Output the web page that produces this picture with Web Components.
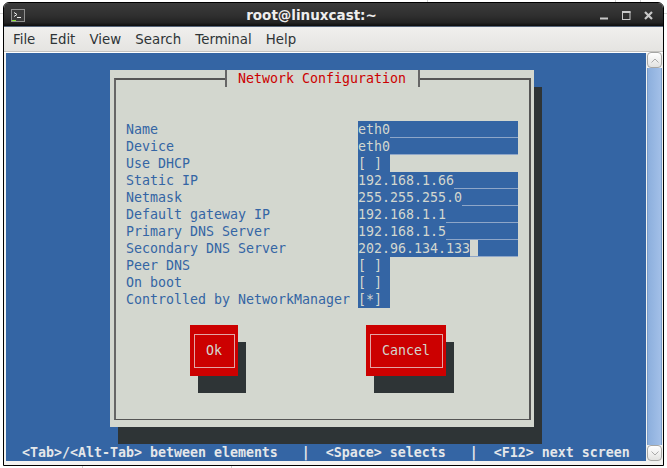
<!DOCTYPE html>
<html>
<head>
<meta charset="utf-8">
<style>
  html, body { margin: 0; height: 100%; overflow: hidden; }
  html { background-color: #fff;
    background-image: linear-gradient(#d8d8d8, #d8d8d8), linear-gradient(#d8d8d8, #d8d8d8),
      linear-gradient(#d0d0d0, #d0d0d0), linear-gradient(#d0d0d0, #d0d0d0), linear-gradient(#d0d0d0, #d0d0d0),
      linear-gradient(#d0d0d0, #d0d0d0), linear-gradient(#d0d0d0, #d0d0d0);
    background-repeat: no-repeat;
    background-size: 3px 1px, 3px 1px, 1px 2px, 1px 2px, 1px 2px, 1px 2px, 1px 2px;
    background-position: 0 13px, 664px 13px, 427px 0, 615px 0, 640px 0, 82px 466px, 231px 466px; }
  body { background: transparent; }
</style>
</head>
<body>
<term-window title="root@linuxcast:~">
  <menu-bar items="File,Edit,View,Search,Terminal,Help"></menu-bar>
  <term-dialog heading="Network Configuration">
    <config-row label="Name" value="eth0"></config-row>
    <config-row label="Device" value="eth0"></config-row>
    <config-row label="Use DHCP" check=" "></config-row>
    <config-row label="Static IP" value="192.168.1.66"></config-row>
    <config-row label="Netmask" value="255.255.255.0"></config-row>
    <config-row label="Default gateway IP" value="192.168.1.1"></config-row>
    <config-row label="Primary DNS Server" value="192.168.1.5"></config-row>
    <config-row label="Secondary DNS Server" value="202.96.134.133" focused></config-row>
    <config-row label="Peer DNS" check=" "></config-row>
    <config-row label="On boot" check=" "></config-row>
    <config-row label="Controlled by NetworkManager" check="*"></config-row>
    <div slot="buttons" style="display:contents">
      <term-button label="Ok"></term-button>
      <term-button label="Cancel"></term-button>
    </div>
  </term-dialog>
  <span slot="status">  &lt;Tab&gt;/&lt;Alt-Tab&gt; between elements   |  &lt;Space&gt; selects   |  &lt;F12&gt; next screen</span>
</term-window>

<script>
const MONO = `13.29px/17px "DejaVu Sans Mono", monospace`;

class TermWindow extends HTMLElement {
  constructor() {
    super();
    this.shadow = this.attachShadow({ mode: "open" });
    this.shadow.innerHTML = `
      <style>
        :host { box-sizing: border-box; width: 661px; height: 464px; margin: 2px 0 0 3px;
          border: 1px solid #000; border-radius: 6px 6px 0 0; background: #f2f2f0; overflow: hidden;
          display: flex; flex-direction: column; }
        .title { height: 23px; flex: none; position: relative; display: flex; align-items: center; justify-content: center;
          background: linear-gradient(#3b3b3b, #2f2f2f 55%, #232323 85%, #0c0c0c);
          border-bottom: 1px solid #56657a; padding-right: 44px; box-sizing: content-box;
          color: #eee; font: bold 13.5px "DejaVu Sans", sans-serif; }
        .icon { position: absolute; left: 7px; top: 6px; }
        .controls { position: absolute; right: 10px; top: 8px; display: flex; gap: 13px; }
        .controls svg { display: block; }
        .term { flex: 1; display: flex; align-items: flex-start; padding: 0 1px 0 2px; border-top: 1px solid #fff; min-height: 0; }
        .screen { width: 640px; height: 408px; background: #3465a4; display: flex; flex-direction: column; }
        .body { height: 391px; padding: 17px 0 0 104px; box-sizing: border-box; }
        .status { height: 17px; color: #e4e7ea; font: bold ${MONO}; white-space: pre; }
        .bar { flex: none; width: 15px; height: 409px; margin: -1px 0 0 1px; display: flex; flex-direction: column; }
        .arrow { height: 14px; flex: none; background: linear-gradient(#fff, #e2e2e0); border: 1px solid #a6a6a4; border-radius: 4px; display: flex; align-items: center; justify-content: center; }
        .track { flex: 1; background: linear-gradient(90deg, #8cafdd, #a3c0e8); border: solid #7b9cc8; border-width: 0 1px; }
      </style>
      <div class="title">
        <svg class="icon" width="14" height="13" viewBox="0 0 14 13">
          <rect x=".5" y=".5" width="13" height="12" fill="#3a3a3a" stroke="#8f8f8f"/>
          <path d="M3 3.500l3 2-3 2M6 8.500h4" fill="none" stroke="#eee"/>
          <path d="M1 11.500h4" stroke="#8ae234"/>
        </svg>
        <span class="name"></span>
        <div class="controls">
          <svg width="9" height="9" viewBox="0 0 9 9"><path d="M0 7.500h8" stroke="#c8c8c8" stroke-width="2"/></svg>
          <svg width="9" height="9" viewBox="0 0 9 9"><rect x=".5" y="1" width="7.500" height="7.500" fill="none" stroke="#c8c8c8"/><path d="M0 1h8.500" stroke="#c8c8c8" stroke-width="2"/></svg>
          <svg width="9" height="9" viewBox="0 0 9 9"><path d="M1 1l7 7M8 1l-7 7" stroke="#c8c8c8" stroke-width="2.200"/></svg>
        </div>
      </div>
      <slot name="menu"></slot>
      <div class="term">
        <div class="screen">
          <div class="body"><slot></slot></div>
          <div class="status"><slot name="status"></slot></div>
        </div>
        <div class="bar">
          <div class="arrow"><svg width="8" height="5" viewBox="0 0 8 5"><path d="M.5 4.500L4 1l3.500 3.500" fill="none" stroke="#aaa"/></svg></div>
          <div class="track"></div>
          <div class="arrow"><svg width="8" height="5" viewBox="0 0 8 5"><path d="M.5 .5L4 4l3.500-3.500" fill="none" stroke="#aaa"/></svg></div>
        </div>
      </div>
    `;
    this.shadow.querySelector(".name").textContent = this.getAttribute("title");
    this.removeAttribute("title");
  }
}

class MenuBar extends HTMLElement {
  constructor() {
    super();
    this.shadow = this.attachShadow({ mode: "open" });
    this.shadow.innerHTML = `
      <style>
        :host { display: flex; box-sizing: border-box; height: 25px; padding-left: 9px; gap: 14.2px; align-items: center; flex: none;
          background: linear-gradient(#f0efed, #e5e4e1); border-bottom: 1px solid #c4c3c0;
          color: #2e3436; font: 13.33px "DejaVu Sans", sans-serif; }
      </style>
    `;
    this.slot = "menu";
    for (const item of this.getAttribute("items").split(",")) {
      const el = document.createElement("span");
      el.textContent = item;
      this.shadow.appendChild(el);
    }
  }
}

class TermDialog extends HTMLElement {
  constructor() {
    super();
    this.shadow = this.attachShadow({ mode: "open" });
    this.shadow.innerHTML = `
      <style>
        :host { display: block; box-sizing: border-box; width: 424px; height: 357px; background: #d3d7cf;
          box-shadow: 8px 17px 0 #2e3436; position: relative; padding: 51px 0 0 16px;
          font: ${MONO}; }
        .frame { position: absolute; left: 4px; top: 8px; right: 3px; bottom: 7px; border: 1px solid #555753; border-width: 2px 2px 1px 2px; border-color: #555 #555 #555 #666; pointer-events: none; }
        .heading { position: absolute; left: 115px; top: 0; width: 195px; height: 17px; background: #d3d7cf; border: solid #666; border-width: 0 2px; color: #cc0000; padding-left: 11px; box-sizing: border-box; white-space: pre; }
        .buttons { display: flex; margin: 17px 0 0 64px; gap: 128px; }
      </style>
      <div class="frame"></div>
      <div class="heading"></div>
      <slot></slot>
      <div class="buttons"><slot name="buttons"></slot></div>
    `;
    this.shadow.querySelector(".heading").textContent = this.getAttribute("heading");
  }
}

class ConfigRow extends HTMLElement {
  constructor() {
    super();
    this.shadow = this.attachShadow({ mode: "open" });
    this.shadow.innerHTML = `
      <style>
        :host { display: flex; height: 17px; white-space: pre; }
        .label { width: 232px; flex: none; color: #3465a4; }
        .field { background: #3465a4; color: #d3d7cf; width: 160px; height: 17px; display: flex; }
        .check { background: #3465a4; color: #d3d7cf; width: 32px; height: 17px; }
        .rest { flex: 1; border-bottom: 1px solid #8ea6c8; box-sizing: border-box; height: 17px; }
        .cursor { width: 8px; height: 17px; background: #d3d7cf; flex: none; border-bottom: 1px solid #8ea6c8; box-sizing: border-box; }
      </style>
      <span class="label"></span>
    `;
    this.shadow.querySelector(".label").textContent = this.getAttribute("label");
    if (this.hasAttribute("check")) {
      const check = document.createElement("span");
      check.className = "check";
      check.textContent = `[${this.getAttribute("check")}] `;
      this.shadow.appendChild(check);
    } else {
      const field = document.createElement("span");
      field.className = "field";
      const text = document.createElement("span");
      text.textContent = this.getAttribute("value");
      field.appendChild(text);
      if (this.hasAttribute("focused")) {
        const cursor = document.createElement("span");
        cursor.className = "cursor";
        field.appendChild(cursor);
      }
      const rest = document.createElement("span");
      rest.className = "rest";
      field.appendChild(rest);
      this.shadow.appendChild(field);
    }
  }
}

class TermButton extends HTMLElement {
  constructor() {
    super();
    this.shadow = this.attachShadow({ mode: "open" });
    this.shadow.innerHTML = `
      <style>
        :host { display: block; background: #cc0000; box-shadow: 8px 17px 0 #2e3436; color: #d3d7cf; padding: 9px 3px 8px 4px; height: 51px; box-sizing: border-box; }
        .inner { border: 1px solid #e3a5a5; height: 100%; box-sizing: border-box; display: flex; align-items: center; padding: 0 12px 2px 11px; white-space: pre; }
      </style>
      <div class="inner"></div>
    `;
    this.shadow.querySelector(".inner").textContent = this.getAttribute("label");
  }
}

customElements.define("term-window", TermWindow);
customElements.define("menu-bar", MenuBar);
customElements.define("term-dialog", TermDialog);
customElements.define("config-row", ConfigRow);
customElements.define("term-button", TermButton);
</script>
</body>
</html>
